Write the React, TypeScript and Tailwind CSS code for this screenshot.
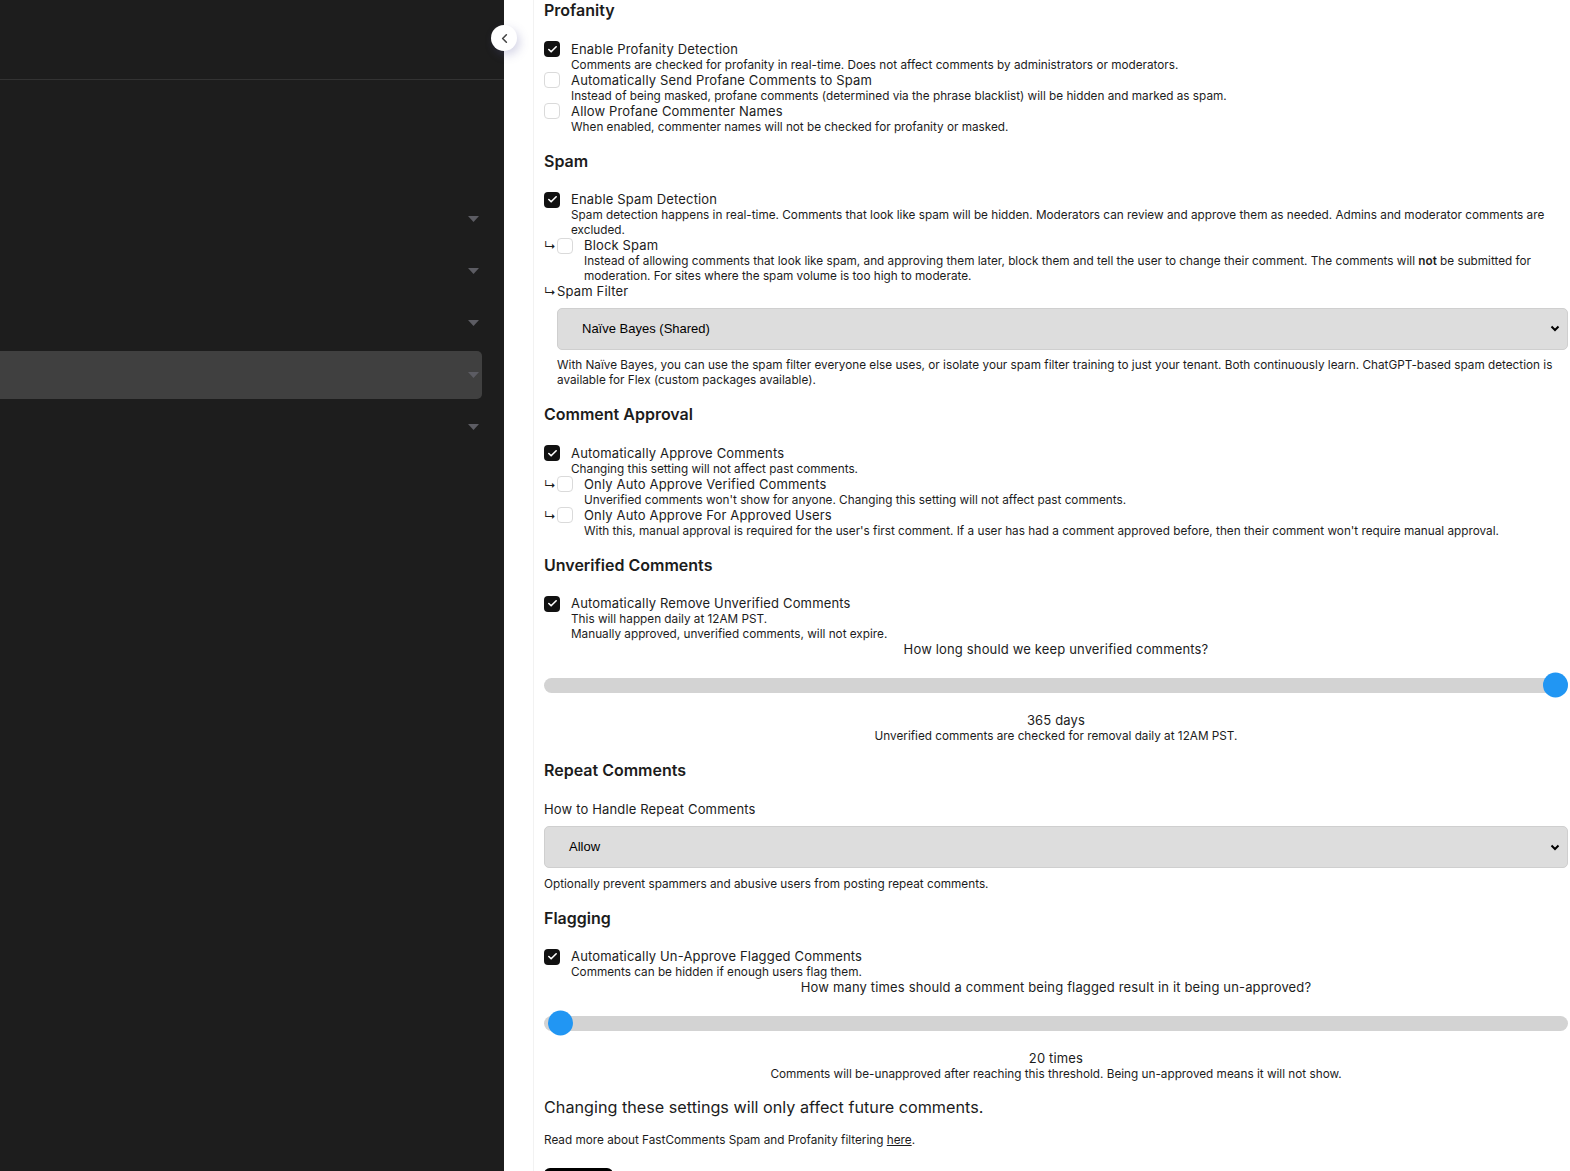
import { ChevronLeft, Check } from 'lucide-react';
import type { ReactNode } from 'react';

function Box({ checked }: { checked?: boolean }) {
  return checked ? (
    <span className="flex h-4 w-4 shrink-0 items-center justify-center rounded-[4px] bg-[#111]">
      <Check size={11} strokeWidth={3.5} className="text-white" />
    </span>
  ) : (
    <span className="h-4 w-4 shrink-0 rounded-[4px] border border-[#dadada] bg-white" />
  );
}

function Option({
  label,
  checked,
  nested,
  children,
}: {
  label: string;
  checked?: boolean;
  nested?: boolean;
  children: ReactNode;
}) {
  return (
    <div className="flex">
      {nested && <span className="w-[13px] shrink-0 text-[12px] leading-[15px]">↳</span>}
      <div className="flex h-[15px] items-center">
        <Box checked={checked} />
      </div>
      <div className="ml-[11px] min-w-0 flex-1">
        <div className="text-[13px] leading-[15px] tracking-[0.012em]">{label}</div>
        <div className="pt-px text-[11.75px] leading-[15px]">{children}</div>
      </div>
    </div>
  );
}

function Heading({ children, first }: { children: ReactNode; first?: boolean }) {
  return (
    <h3
      className={`text-[16px] leading-[20px] font-semibold ${first ? 'mb-[21.5px]' : 'mt-[16px] mb-[21.5px]'}`}
    >
      {children}
    </h3>
  );
}

function Select({ value }: { value: string }) {
  return (
    <div className="flex h-[42px] items-center justify-between rounded-[5px] border border-[#cfcfcf] bg-[#dddddd] pl-[24px] pr-[7px] font-['Liberation_Sans',sans-serif] text-[13px] text-black">
      <span>{value}</span>
      <svg width="10" height="7" viewBox="0 0 10 7">
        <path d="M1.5 1.5 L5 5 L8.5 1.5" fill="none" stroke="#000" strokeWidth="2" />
      </svg>
    </div>
  );
}

function Slider({ pct }: { pct: number }) {
  return (
    <div className="flex h-[56px] items-center">
      <div className="relative h-[15px] w-full rounded-full bg-[#d3d3d3]">
        <span
          className="absolute top-1/2 h-[25px] w-[25px] -translate-y-1/2 rounded-full bg-[#2196f3]"
          style={{ left: `calc(${pct} * (100% - 25px))` }}
        />
      </div>
    </div>
  );
}

const navRows = [0, 1, 2, 3, 4];

export default function App() {
  return (
    <div className="flex h-[1171px] overflow-hidden bg-white font-['Inter',sans-serif] text-[#1c1c1c]">
      <aside className="relative w-[504px] shrink-0 bg-[#1d1d1d]">
        <div className="h-[80px] border-b border-[#333]" />
        <nav className="flex flex-col gap-[4px] pt-[115px] pr-[22px]">
          {navRows.map((i) => (
            <div
              key={i}
              className={`flex h-[48px] items-center justify-end rounded-r-[5px] pr-[3px] ${i === 3 ? 'bg-[#404040]' : ''}`}
            >
              <svg width="11" height="6" viewBox="0 0 11 6">
                <path d="M0 0 H11 L5.5 6 Z" fill="#5c5c63" />
              </svg>
            </div>
          ))}
        </nav>
        <button className="absolute top-[25px] right-[-13px] z-10 flex h-[26px] w-[26px] items-center justify-center rounded-full bg-white shadow-[3px_4px_10px_rgba(90,90,160,0.25)]">
          <ChevronLeft size={15} strokeWidth={2.5} className="text-[#444]" />
        </button>
      </aside>

      <main className="flex-1 bg-white pl-[29px]">
        <div className="h-full border-l border-[#f2f2f2] pl-[10px] pr-[2px]">
          <Heading first>Profanity</Heading>
          <Option label="Enable Profanity Detection" checked>
            Comments are checked for profanity in real-time. Does not affect comments by administrators or moderators.
          </Option>
          <Option label="Automatically Send Profane Comments to Spam">
            Instead of being masked, profane comments (determined via the phrase blacklist) will be hidden and marked as spam.
          </Option>
          <Option label="Allow Profane Commenter Names">
            When enabled, commenter names will not be checked for profanity or masked.
          </Option>

          <Heading>Spam</Heading>
          <Option label="Enable Spam Detection" checked>
            Spam detection happens in real-time. Comments that look like spam will be hidden. Moderators can review and approve them as needed. Admins and moderator comments are excluded.
          </Option>
          <Option label="Block Spam" nested>
            Instead of allowing comments that look like spam, and approving them later, block them and tell the user to change their comment. The comments will <b className="font-semibold">not</b> be submitted for moderation. For sites where the spam volume is too high to moderate.
          </Option>
          <div className="flex">
            <span className="w-[13px] shrink-0 text-[12px] leading-[15px]">↳</span>
            <div className="flex-1">
              <div className="text-[13px] leading-[15px] tracking-[0.012em]">Spam Filter</div>
              <div className="mt-[8.5px]">
                <Select value="Naïve Bayes (Shared)" />
              </div>
              <p className="mt-[8.5px] text-[11.75px] leading-[15px]">
                With Naïve Bayes, you can use the spam filter everyone else uses, or isolate your spam filter training to just your tenant. Both continuously learn. ChatGPT-based spam detection is available for Flex (custom packages available).
              </p>
            </div>
          </div>

          <Heading>Comment Approval</Heading>
          <Option label="Automatically Approve Comments" checked>
            Changing this setting will not affect past comments.
          </Option>
          <Option label="Only Auto Approve Verified Comments" nested>
            Unverified comments won't show for anyone. Changing this setting will not affect past comments.
          </Option>
          <Option label="Only Auto Approve For Approved Users" nested>
            With this, manual approval is required for the user's first comment. If a user has had a comment approved before, then their comment won't require manual approval.
          </Option>

          <Heading>Unverified Comments</Heading>
          <Option label="Automatically Remove Unverified Comments" checked>
            This will happen daily at 12AM PST.
            <br />
            Manually approved, unverified comments, will not expire.
          </Option>
          <div className="text-center text-[13px] leading-[15px] tracking-[0.012em]">How long should we keep unverified comments?</div>
          <Slider pct={1} />
          <div className="text-center text-[13px] leading-[15px] tracking-[0.012em]">365 days</div>
          <div className="pt-px text-center text-[11.75px] leading-[15px]">Unverified comments are checked for removal daily at 12AM PST.</div>

          <Heading>Repeat Comments</Heading>
          <div className="text-[13px] leading-[15px] tracking-[0.012em]">How to Handle Repeat Comments</div>
          <div className="mt-[9.5px]">
            <Select value="Allow" />
          </div>
          <p className="mt-[8.5px] text-[11.75px] leading-[15px]">Optionally prevent spammers and abusive users from posting repeat comments.</p>

          <Heading>Flagging</Heading>
          <Option label="Automatically Un-Approve Flagged Comments" checked>
            Comments can be hidden if enough users flag them.
          </Option>
          <div className="text-center text-[13px] leading-[15px] tracking-[0.012em]">How many times should a comment being flagged result in it being un-approved?</div>
          <Slider pct={0.0045} />
          <div className="text-center text-[13px] leading-[15px] tracking-[0.012em]">20 times</div>
          <div className="pt-px text-center text-[11.75px] leading-[15px]">Comments will be-unapproved after reaching this threshold. Being un-approved means it will not show.</div>

          <p className="mt-[14px] text-[16.2px] leading-[22px]">Changing these settings will only affect future comments.</p>
          <p className="mt-[14.5px] text-[11.75px] leading-[15px]">
            Read more about FastComments Spam and Profanity filtering <a className="underline">here</a>.
          </p>
          <button className="mt-[20.5px] h-[36px] w-[69px] rounded-[6px] bg-black text-white" />
        </div>
      </main>
    </div>
  );
}
